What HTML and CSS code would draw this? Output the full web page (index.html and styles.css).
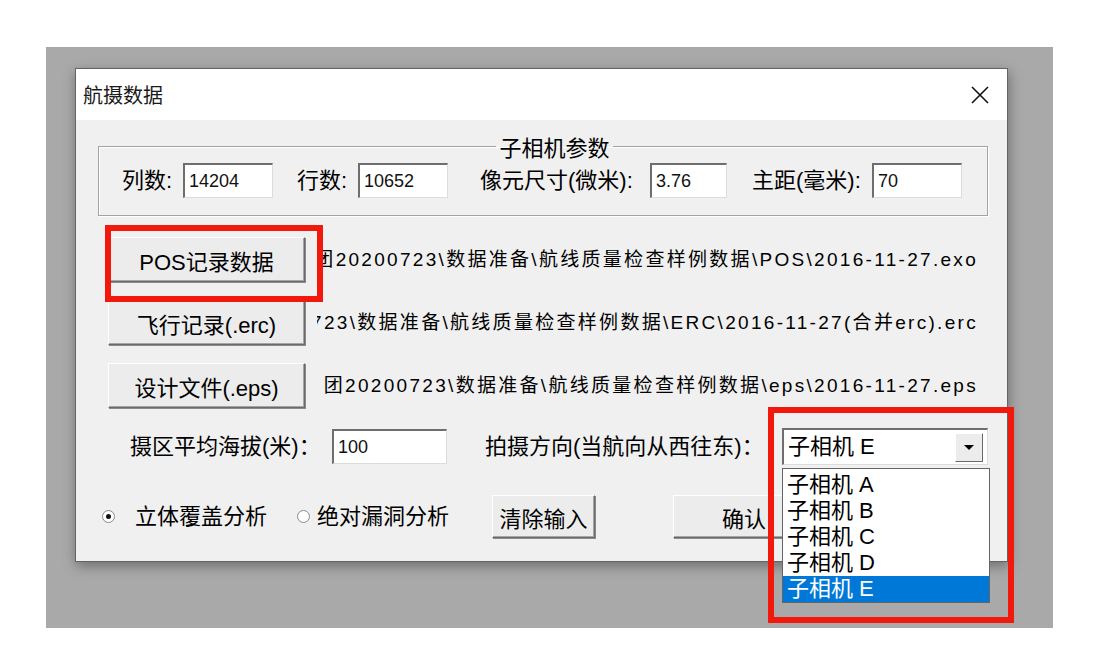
FILE: index.html
```html
<!DOCTYPE html>
<html lang="zh-CN">
<head>
<meta charset="utf-8">
<title>航摄数据</title>
<link rel="stylesheet" href="styles.css">
</head>
<body>
<div class="page">
  <div class="screen">
    <div class="dialog">
      <div class="titlebar">
        <span class="title">航摄数据</span>
        <svg class="close" width="20" height="20" viewBox="0 0 20 20"><path d="M2 2 L18 18 M18 2 L2 18" stroke="#111" stroke-width="1.6" fill="none"/></svg>
      </div>
      <div class="content">
        <fieldset class="group">
          <legend>子相机参数</legend>
          <div class="params">
            <span class="lbl l1">列数:</span><div class="input w90">14204</div>
            <span class="lbl l2">行数:</span><div class="input w90">10652</div>
            <span class="lbl l3">像元尺寸(微米):</span><div class="input w77">3.76</div>
            <span class="lbl l4">主距(毫米):</span><div class="input w90">70</div>
          </div>
        </fieldset>

        <div class="filerow first">
          <button class="btn file">POS记录数据</button>
          <div class="path"><span>集团20200723\数据准备\航线质量检查样例数据\POS\2016-11-27.exo</span></div>
        </div>
        <div class="filerow">
          <button class="btn file">飞行记录(.erc)</button>
          <div class="path"><span>0723\数据准备\航线质量检查样例数据\ERC\2016-11-27(合并erc).erc</span></div>
        </div>
        <div class="filerow">
          <button class="btn file">设计文件(.eps)</button>
          <div class="path"><span>团20200723\数据准备\航线质量检查样例数据\eps\2016-11-27.eps</span></div>
        </div>

        <div class="row5">
          <span class="lbl alt">摄区平均海拔(米)：</span>
          <div class="input w115">100</div>
          <span class="lbl dir">拍摄方向(当航向从西往东)：</span>
          <div class="combo">
            <span class="combo-text">子相机 E</span>
            <span class="combo-btn"><span class="tri"></span></span>
            <ul class="list">
              <li>子相机 A</li>
              <li>子相机 B</li>
              <li>子相机 C</li>
              <li>子相机 D</li>
              <li class="sel">子相机 E</li>
            </ul>
          </div>
        </div>

        <div class="row6">
          <span class="radio checked r1"></span><span class="rlabel t1">立体覆盖分析</span>
          <span class="radio r2"></span><span class="rlabel t2">绝对漏洞分析</span>
          <button class="btn clear">清除输入</button>
          <button class="btn ok">确认</button>
        </div>
      </div>
    </div>
  </div>
  <div class="mark m1"></div>
  <div class="mark m2"></div>
</div>
</body>
</html>
```

FILE: styles.css
```css
html, body {
  margin: 0;
  padding: 0;
  background: #ffffff;
}

.page {
  position: relative;
  width: 1095px;
  height: 649px;
  box-sizing: border-box;
  padding: 47px 0 0 46px;
  font-family: "Liberation Sans", "Noto Sans CJK SC", sans-serif;
  color: #000;
}

.screen {
  width: 1007px;
  height: 581px;
  box-sizing: border-box;
  padding: 21px 0 0 29px;
  background: #a9a9a9;
}

.dialog {
  width: 933px;
  height: 494px;
  box-sizing: border-box;
  border: 1px solid #636363;
  background: #f0f0f0;
  box-shadow: 1px 4px 12px rgba(0, 0, 0, 0.35);
  display: flex;
  flex-direction: column;
}

.titlebar {
  height: 51px;
  flex: none;
  background: #ffffff;
  display: flex;
  align-items: center;
  justify-content: space-between;
  padding: 0 17px 0 7px;
}

.title {
  font-family: "Noto Sans CJK SC", sans-serif;
  font-size: 20px;
  line-height: 24px;
  color: #1a1a1a;
}

.close {
  display: block;
}

.content {
  flex: 1;
  display: flex;
  flex-direction: column;
  align-items: flex-start;
}

/* group box */
.group {
  margin: 13px 19px 0 22px;
  width: 890px;
  box-sizing: border-box;
  padding: 4px 0 17px 23px;
  border: 1px solid #a3a3a3;
  box-shadow: inset 1px 1px 0 #ffffff, 1px 1px 0 #ffffff;
  min-inline-size: 0;
}

.group legend {
  margin: 0 auto;
  padding: 0 3px;
  font-family: "Noto Sans CJK SC", sans-serif;
  font-size: 22px;
  line-height: 26px;
}

.params {
  display: flex;
  align-items: center;
  height: 35px;
}

.lbl {
  font-size: 22px;
  line-height: 28px;
  white-space: nowrap;
}

.l1 { width: 61px; }
.l2 { width: 61px; margin-left: 24px; }
.l3 { width: 170px; margin-left: 32px; }
.l4 { width: 120px; margin-left: 25px; }

.input {
  height: 35px;
  box-sizing: border-box;
  background: #ffffff;
  border-top: 2px solid #6e6e6e;
  border-left: 2px solid #6e6e6e;
  border-right: 1px solid #dcdcdc;
  border-bottom: 1px solid #dcdcdc;
  font-family: "Liberation Sans", sans-serif;
  font-size: 18px;
  line-height: 32px;
  padding-left: 4px;
  color: #111;
}

.w90 { width: 90px; }
.w77 { width: 77px; }
.w115 { width: 115px; }

/* buttons */
.btn {
  box-sizing: border-box;
  margin: 0;
  padding: 0;
  background: #ececec;
  border: 1px solid;
  border-color: #ffffff #6a6a6a #6a6a6a #ffffff;
  box-shadow: inset -1px -1px 0 #a5a5a5, 1px 1px 0 #8a8a8a;
  font-family: "Liberation Sans", "Noto Sans CJK SC", sans-serif;
  font-size: 22px;
  color: #000;
}

/* file rows */
.filerow {
  display: flex;
  align-items: center;
  margin: 18px 0 0 32px;
  height: 45px;
}

.filerow.first {
  margin-top: 21px;
}

.btn.file {
  width: 197px;
  height: 45px;
}

.path {
  width: 661px;
  margin-left: 12px;
  display: flex;
  justify-content: flex-end;
  overflow: hidden;
  white-space: nowrap;
}

.path span {
  flex: none;
  font-size: 19px;
  letter-spacing: 2.3px;
  line-height: 26px;
}

/* row 5 */
.row5 {
  display: flex;
  align-items: center;
  height: 37px;
  margin: 20px 0 0 54px;
}

.lbl.alt { width: 202px; }
.lbl.dir { width: 297px; margin-left: 38px; }

.combo {
  position: relative;
  width: 206px;
  height: 37px;
  box-sizing: border-box;
  background: #ffffff;
  border-top: 2px solid #6e6e6e;
  border-left: 2px solid #6e6e6e;
  border-right: 1px solid #dcdcdc;
  border-bottom: 1px solid #dcdcdc;
  display: flex;
  align-items: center;
  justify-content: space-between;
  padding: 0 4px 0 4px;
}

.combo-text {
  font-size: 22px;
  line-height: 28px;
}

.combo-btn {
  width: 28px;
  height: 29px;
  box-sizing: border-box;
  background: #ececec;
  border: 1px solid;
  border-color: #ffffff #6a6a6a #6a6a6a #ffffff;
  display: flex;
  align-items: center;
  justify-content: center;
}

.tri {
  width: 0;
  height: 0;
  border-left: 5px solid transparent;
  border-right: 5px solid transparent;
  border-top: 5px solid #000;
}

.list {
  position: absolute;
  top: 38px;
  left: -2px;
  width: 208px;
  height: 135px;
  box-sizing: border-box;
  margin: 0;
  padding: 3px 0 0 0;
  list-style: none;
  background: #ffffff;
  border: 1px solid #646464;
  z-index: 5;
}

.list li {
  font-size: 22px;
  line-height: 26px;
  height: 26px;
  padding-left: 4px;
  white-space: nowrap;
}

.list li.sel {
  background: #0078d7;
  color: #ffffff;
}

/* row 6 */
.row6 {
  display: flex;
  align-items: center;
  height: 43px;
  margin: 30px 0 0 26px;
}

.radio {
  width: 13px;
  height: 13px;
  box-sizing: border-box;
  border: 1px solid #8a8a8a;
  border-radius: 50%;
  background: #ffffff;
  display: flex;
  align-items: center;
  justify-content: center;
}

.radio.checked::after {
  content: "";
  width: 5px;
  height: 5px;
  border-radius: 50%;
  background: #111;
}

.rlabel {
  font-size: 22px;
  line-height: 28px;
  white-space: nowrap;
}

.t1 { margin-left: 20px; width: 142px; }
.r2 { margin-left: 20px; }
.t2 { margin-left: 7px; width: 175px; }

.btn.clear {
  width: 103px;
  height: 43px;
}

.btn.ok {
  width: 142px;
  height: 43px;
  margin-left: 78px;
}

/* annotation marks */
.mark {
  position: absolute;
  box-sizing: border-box;
  border: 6px solid #f2190c;
  z-index: 10;
}

.m1 {
  left: 105px;
  top: 225px;
  width: 218px;
  height: 77px;
}

.m2 {
  left: 768px;
  top: 407px;
  width: 246px;
  height: 216px;
}
```
